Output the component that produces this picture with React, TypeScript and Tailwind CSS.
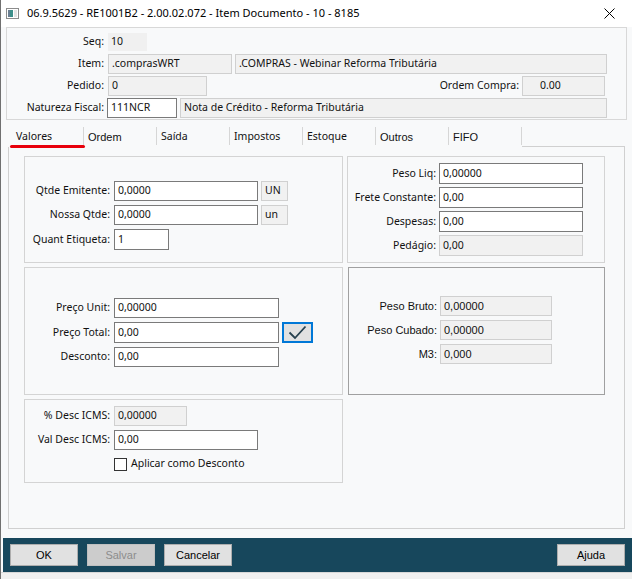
import React from "react";

// Ficha "Item Documento" – aba Valores
const sans = "font-['Noto_Sans',sans-serif]";
const narrow = "font-['Liberation_Sans',Arial,sans-serif]";

type BoxProps = { value?: string; w: string; ro?: boolean; extra?: string };

function Box({ value = "", w, ro = false, extra = "" }: BoxProps) {
  const look = ro ? "border-[#d0d0d0] bg-[#f1f1f1]" : "border-[#7a7a7a] bg-white";
  return (
    <div className={`${w} h-full flex items-center px-[3px] border ${look} whitespace-nowrap overflow-hidden ${extra}`}>
      {value}
    </div>
  );
}

type RowProps = { label: string; lw: string; h: string; gap: string; children: React.ReactNode };

function Row({ label, lw, h, gap, children }: RowProps) {
  return (
    <div className={`flex items-center ${h} ${gap}`}>
      <span className={`${lw} text-right whitespace-nowrap`}>{label}</span>
      {children}
    </div>
  );
}

const tabs = [
  { name: "Valores", n: false },
  { name: "Ordem", n: true },
  { name: "Saída", n: false },
  { name: "Impostos", n: false },
  { name: "Estoque", n: false },
  { name: "Outros", n: true },
  { name: "FIFO", n: true },
];

export default function App() {
  return (
    <div className={`w-[632px] h-[579px] overflow-hidden bg-[#f8f9fa] border-l border-[#707070] flex flex-col text-[10.5px] text-[#111] ${sans}`}>
      {/* Barra de título */}
      <div className="h-[27px] shrink-0 bg-white flex items-center pl-[5px] pr-[17px]">
        <svg width="13" height="11" viewBox="0 0 13 11" className="shrink-0">
          <rect x="0.5" y="0.5" width="12" height="10" fill="#fff" stroke="#8c8c8c" />
          <rect x="2" y="2" width="5" height="7" fill="#3d8f8a" />
          <rect x="2" y="2" width="2" height="7" fill="#6a7f92" />
          <rect x="8" y="2" width="3" height="7" fill="#e4e4e4" />
        </svg>
        <span className="ml-[8px] text-[11px] text-black whitespace-nowrap">
          06.9.5629 - RE1001B2 - 2.00.02.072 - Item Documento - 10 - 8185
        </span>
        <svg width="11" height="11" viewBox="0 0 11 11" className="ml-auto">
          <path d="M0.5 0.5 L10.5 10.5 M10.5 0.5 L0.5 10.5" stroke="#000" strokeWidth="1" />
        </svg>
      </div>

      {/* Cabeçalho */}
      <div className="ml-[5px] w-[621px] h-[93px] shrink-0 border border-[#d8d8d8] pt-[4px] flex flex-col gap-[2px]">
        <Row label="Seq:" lw="w-[97px]" h="h-[20px]" gap="gap-[4px]">
          <div className="w-[39px] h-[18px] flex items-center px-[3px] bg-[#f0f0f0]">10</div>
        </Row>
        <Row label="Item:" lw="w-[97px]" h="h-[20px]" gap="gap-[4px]">
          <Box w="w-[124px]" value=".comprasWRT" ro />
          <Box w="w-[372px]" value=".COMPRAS - Webinar Reforma Tributária" ro extra="-ml-[1px]" />
        </Row>
        <div className="flex items-center h-[20px]">
          <span className="w-[97px] text-right">Pedido:</span>
          <Box w="w-[99px] ml-[4px]" value="0" ro />
          <span className="w-[312px] text-right">Ordem Compra:</span>
          <Box w="w-[83px] ml-[3px]" value="0.00" ro extra="pl-[17px]" />
        </div>
        <Row label="Natureza Fiscal:" lw="w-[97px]" h="h-[20px]" gap="gap-[3px]">
          <Box w="w-[70px]" value="111NCR" />
          <Box w="w-[427px]" value="Nota de Crédito - Reforma Tributária" ro />
        </Row>
      </div>

      {/* Abas */}
      <div className="ml-[7px] w-[617px] h-[27px] shrink-0 flex pl-[3px]">
        {tabs.map((t, i) => (
          <div
            key={t.name}
            className={`relative w-[73px] h-[18px] mt-[7px] flex items-center pt-[2px] border-r border-[#d6d6d6] ${i === 0 ? "pl-[5px]" : "pl-[4px]"} ${t.n ? `${narrow} text-[11px]` : ""}`}
          >
            {t.name}
            {i === 0 && <div className="absolute -left-[1px] top-[18px] w-[75px] h-[3px] rounded-full bg-[#e8000b]" />}
          </div>
        ))}
        <div className="flex-1 border-b border-[#d0d0d0]" />
      </div>

      {/* Conteúdo da aba */}
      <div className="ml-[7px] w-[617px] h-[382px] shrink-0 border-l border-r border-b border-[#d0d0d0] pt-[9px] pl-[15px] flex gap-[4px]">
        <div className="w-[319px] flex flex-col gap-[4px]">
          <div className="h-[107px] border border-[#d4d4d4] pt-[24px] flex flex-col gap-[4px]">
            <Row label="Qtde Emitente:" lw="w-[85px]" h="h-[20px]" gap="gap-[4px]">
              <Box w="w-[144px]" value="0,0000" />
              <Box w="w-[27px]" value="UN" ro extra="ml-[-1px]" />
            </Row>
            <Row label="Nossa Qtde:" lw="w-[85px]" h="h-[20px]" gap="gap-[4px]">
              <Box w="w-[144px]" value="0,0000" />
              <Box w="w-[27px]" value="un" ro extra="ml-[-1px]" />
            </Row>
            <Row label="Quant Etiqueta:" lw="w-[85px]" h="h-[21px]" gap="gap-[4px]">
              <Box w="w-[55px]" value="1" />
            </Row>
          </div>

          <div className="h-[128px] border border-[#d4d4d4] pt-[30px] flex flex-col gap-[4px]">
            <Row label="Preço Unit:" lw="w-[85px]" h="h-[20px]" gap="gap-[4px]">
              <Box w="w-[165px]" value="0,00000" />
            </Row>
            <Row label="Preço Total:" lw="w-[85px]" h="h-[21px]" gap="gap-[4px]">
              <Box w="w-[165px]" value="0,00" />
              <button className="w-[31px] h-[21px] ml-[-1px] border-2 border-[#0078d7] bg-[#e1e1e1] flex items-center justify-center">
                <svg width="19" height="15" viewBox="0 0 19 15">
                  <path d="M1.5 7.5 L7 13 L17.5 1.5" fill="none" stroke="#26404e" strokeWidth="1.8" />
                </svg>
              </button>
            </Row>
            <Row label="Desconto:" lw="w-[85px]" h="h-[20px]" gap="gap-[4px]">
              <Box w="w-[165px]" value="0,00" />
            </Row>
          </div>

          <div className="h-[84px] border border-[#d4d4d4] pt-[6px] flex flex-col gap-[4px]">
            <Row label="% Desc ICMS:" lw="w-[85px]" h="h-[20px]" gap="gap-[4px]">
              <Box w="w-[73px]" value="0,00000" ro />
            </Row>
            <Row label="Val Desc ICMS:" lw="w-[85px]" h="h-[20px]" gap="gap-[4px]">
              <Box w="w-[144px]" value="0,00" />
            </Row>
            <div className="h-[20px] flex items-center pl-[89px] gap-[4px]">
              <div className="w-[13px] h-[13px] border border-[#333] bg-white" />
              <span>Aplicar como Desconto</span>
            </div>
          </div>
        </div>

        <div className="w-[258px] flex flex-col gap-[4px]">
          <div className="h-[107px] border border-[#d4d4d4] pt-[6px] flex flex-col gap-[3px]">
            <Row label="Peso Liq:" lw="w-[88px]" h="h-[21px]" gap="gap-[3px]">
              <Box w="w-[144px]" value="0,00000" />
            </Row>
            <Row label="Frete Constante:" lw="w-[88px]" h="h-[21px]" gap="gap-[3px]">
              <Box w="w-[144px]" value="0,00" />
            </Row>
            <Row label="Despesas:" lw="w-[88px]" h="h-[21px]" gap="gap-[3px]">
              <Box w="w-[144px]" value="0,00" />
            </Row>
            <Row label="Pedágio:" lw="w-[88px]" h="h-[21px]" gap="gap-[3px]">
              <Box w="w-[144px]" value="0,00" ro />
            </Row>
          </div>

          <div className={`h-[128px] ml-[1px] border border-[#a0a0a0] pt-[28px] flex flex-col gap-[4px] ${narrow} text-[11px]`}>
            <Row label="Peso Bruto:" lw="w-[88px]" h="h-[20px]" gap="gap-[3px]">
              <Box w="w-[112px]" value="0,00000" ro />
            </Row>
            <Row label="Peso Cubado:" lw="w-[88px]" h="h-[20px]" gap="gap-[3px]">
              <Box w="w-[112px]" value="0,00000" ro />
            </Row>
            <Row label="M3:" lw="w-[88px]" h="h-[20px]" gap="gap-[3px]">
              <Box w="w-[112px]" value="0,000" ro />
            </Row>
          </div>
        </div>
      </div>

      {/* Barra de botões */}
      <div className={`mt-[9px] ml-[2px] h-[34px] shrink-0 bg-[#17475c] flex items-center gap-[9px] pl-[7px] pr-[7px] ${narrow} text-[11px]`}>
        <button className="w-[68px] h-[22px] bg-[#e1e1e1] border border-[#adadad] text-black">OK</button>
        <button className="w-[68px] h-[22px] bg-[#cccccc] border border-[#bfbfbf] text-[#8d8d8d]">Salvar</button>
        <button className="w-[68px] h-[22px] bg-[#e1e1e1] border border-[#adadad] text-black">Cancelar</button>
        <button className="w-[68px] h-[22px] ml-auto bg-[#e1e1e1] border border-[#adadad] text-black">Ajuda</button>
      </div>
      <div className="flex-1 bg-[#f0f0f0] border-t border-[#d8d8d8]" />
    </div>
  );
}
